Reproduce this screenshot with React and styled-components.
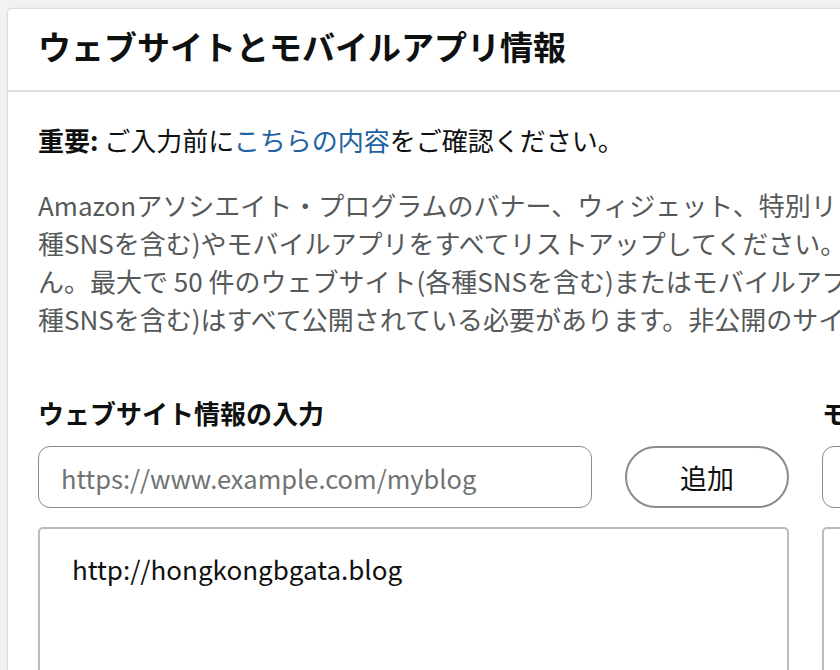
import React from "react";
import styled, { createGlobalStyle } from "styled-components";

const GlobalStyle = createGlobalStyle`
  html, body {
    margin: 0;
    padding: 0;
    background: #f2f2f2;
    overflow: hidden;
  }
  body {
    font-family: "Noto Sans CJK JP", "Noto Sans", sans-serif;
    color: #0f1111;
  }
`;

const Page = styled.div`
  padding: 8px 0 0 7px;
  width: 1800px;
`;

const Card = styled.section`
  background: #fff;
  border: 1px solid #dcdcdc;
  border-radius: 4px;
  box-shadow: 0 0 2px rgba(0, 0, 0, 0.08);
  width: 1700px;
`;

const Header = styled.header`
  display: flex;
  align-items: center;
  padding: 0 30px;
  border-bottom: 2px solid #dedede;
  box-sizing: border-box;
  height: 83px;
`;

const Title = styled.h1`
  margin: 0 0 8px;
  font-size: 33px;
  font-weight: 700;
`;

const Body = styled.div`
  padding: 29px 30px 0;
`;

const Notice = styled.p`
  margin: 0;
  font-size: 26px;
  line-height: 38px;
`;

const Link = styled.a`
  color: #2162a1;
  text-decoration: none;
`;

const Description = styled.div`
  margin-top: 27px;
  color: #565959;
  font-size: 26px;
  line-height: 38px;
`;

const Line = styled.div`
  white-space: nowrap;
`;

const Columns = styled.div`
  display: grid;
  grid-template-columns: 751px 751px;
  column-gap: 33px;
  margin-top: 56px;
`;

const Column = styled.div`
  display: flex;
  flex-direction: column;
`;

const Label = styled.h2`
  margin: 0;
  font-size: 26px;
  line-height: 38px;
  font-weight: 700;
`;

const InputRow = styled.div`
  display: flex;
  gap: 33px;
  margin-top: 14px;
`;

const Input = styled.input`
  flex: 1;
  min-width: 0;
  height: 62px;
  box-sizing: border-box;
  border: 1px solid #888c8c;
  border-radius: 12px;
  padding: 0 22px;
  font-family: inherit;
  font-size: 25.5px;
  color: #0f1111;
  outline: none;
  &::placeholder {
    color: #6f7373;
  }
`;

const AddButton = styled.button`
  width: 164px;
  height: 62px;
  box-sizing: border-box;
  border: 2px solid #888c8c;
  border-radius: 31px;
  background: #fff;
  font-family: inherit;
  font-size: 27px;
  color: #0f1111;
`;

const ListBox = styled.div`
  margin-top: 19px;
  height: 200px;
  border: 2px solid #bbbbbb;
  border-radius: 5px;
  padding: 21px 32px;
  font-size: 26px;
  line-height: 38px;
`;

export default function App() {
  return (
    <>
      <GlobalStyle />
      <Page>
        <Card>
          <Header>
            <Title>ウェブサイトとモバイルアプリ情報</Title>
          </Header>
          <Body>
            <Notice>
              <b>重要:</b> ご入力前に<Link href="#">こちらの内容</Link>をご確認ください。
            </Notice>
            <Description>
              <Line>Amazonアソシエイト・プログラムのバナー、ウィジェット、特別リンクを掲載するウェブサイト(各</Line>
              <Line>種SNSを含む)やモバイルアプリをすべてリストアップしてください。リストにないサイトは審査できませ</Line>
              <Line>ん。最大で 50 件のウェブサイト(各種SNSを含む)またはモバイルアプリを登録できます。ウェブサイト(各</Line>
              <Line>種SNSを含む)はすべて公開されている必要があります。非公開のサイトは登録できません。</Line>
            </Description>
            <Columns>
              <Column>
                <Label>ウェブサイト情報の入力</Label>
                <InputRow>
                  <Input placeholder="https://www.example.com/myblog" />
                  <AddButton>追加</AddButton>
                </InputRow>
                <ListBox>http://hongkongbgata.blog</ListBox>
              </Column>
              <Column>
                <Label>モバイルアプリ情報の入力</Label>
                <InputRow>
                  <Input placeholder="https://play.google.com/store/apps" />
                  <AddButton>追加</AddButton>
                </InputRow>
                <ListBox />
              </Column>
            </Columns>
          </Body>
        </Card>
      </Page>
    </>
  );
}
